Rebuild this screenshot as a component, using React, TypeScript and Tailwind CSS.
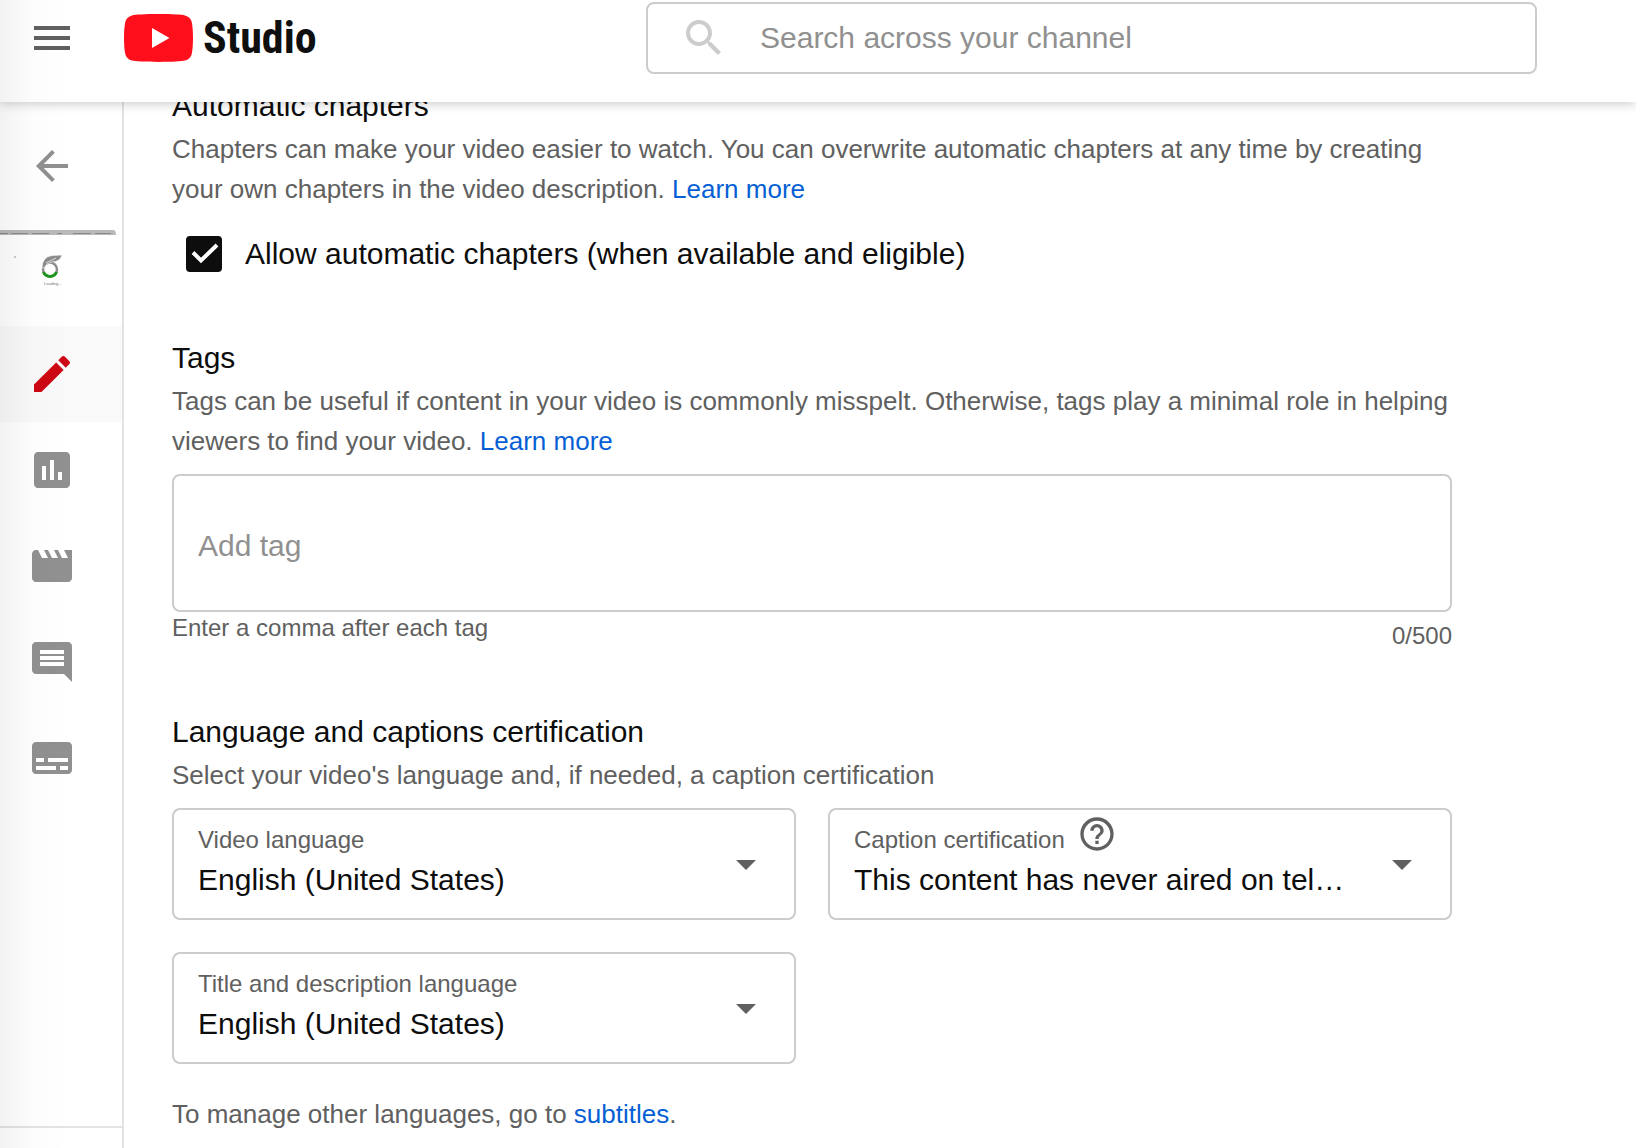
import { ReactNode, useState } from "react";

const iconPaths = {
  menu: "M3 18h18v-2H3v2zm0-5h18v-2H3v2zm0-7v2h18V6H3z",
  search:
    "M15.5 14h-.79l-.28-.27C15.41 12.59 16 11.11 16 9.5 16 5.91 13.09 3 9.5 3S3 5.91 3 9.5 5.91 16 9.5 16c1.61 0 3.09-.59 4.23-1.57l.27.28v.79l5 4.99L20.49 19l-4.99-5zm-6 0C7.01 14 5 11.99 5 9.5S7.01 5 9.5 5 14 7.01 14 9.5 11.99 14 9.5 14z",
  back: "M20 11H7.83l5.59-5.59L12 4l-8 8 8 8 1.41-1.41L7.83 13H20v-2z",
  details:
    "M3 17.25V21h3.75L17.81 9.94l-3.75-3.75L3 17.25zM20.71 7.04c.39-.39.39-1.02 0-1.41l-2.34-2.34c-.39-.39-1.02-.39-1.41 0l-1.83 1.83 3.75 3.75 1.83-1.83z",
  analytics:
    "M19 3H5c-1.1 0-2 .9-2 2v14c0 1.1.9 2 2 2h14c1.1 0 2-.9 2-2V5c0-1.1-.9-2-2-2zM9 17H7v-7h2v7zm4 0h-2V7h2v10zm4 0h-2v-4h2v4z",
  editor:
    "M18 4l2 4h-3l-2-4h-2l2 4h-3l-2-4H8l2 4H7L5 4H4c-1.1 0-1.99.9-1.99 2L2 18c0 1.1.9 2 2 2h16c1.1 0 2-.9 2-2V4h-4z",
  comments:
    "M21.99 4c0-1.1-.89-2-1.99-2H4c-1.1 0-2 .9-2 2v12c0 1.1.9 2 2 2h14l4 4-.01-18zM18 14H6v-2h12v2zm0-3H6V9h12v2zm0-3H6V6h12v2z",
  subtitles:
    "M20 4H4c-1.1 0-2 .9-2 2v12c0 1.1.9 2 2 2h16c1.1 0 2-.9 2-2V6c0-1.1-.9-2-2-2zM4 12h4v2H4v-2zm10 6H4v-2h10v2zm6 0h-4v-2h4v2zm0-4H10v-2h10v2z",
  dropdown: "M7 10l5 5 5-5z",
  help: "M11 18h2v-2h-2v2zm1-16C6.48 2 2 6.48 2 12s4.48 10 10 10 10-4.48 10-10S17.52 2 12 2zm0 18c-4.41 0-8-3.59-8-8s3.59-8 8-8 8 3.59 8 8-3.59 8-8 8zm0-14c-2.21 0-4 1.79-4 4h2c0-1.1.9-2 2-2s2 .9 2 2c0 2-3 1.75-3 5h2c0-2.25 3-2.5 3-5 0-2.21-1.79-4-4-4z",
};

type IconName = keyof typeof iconPaths;

function Icon({
  name,
  className = "size-12",
}: {
  name: IconName;
  className?: string;
}) {
  return (
    <svg
      viewBox="0 0 24 24"
      fill="currentColor"
      aria-hidden="true"
      className={`${className} shrink-0`}
    >
      <path d={iconPaths[name]} />
    </svg>
  );
}

const navItems: { icon: IconName; label: string }[] = [
  { icon: "details", label: "Details" },
  { icon: "analytics", label: "Analytics" },
  { icon: "editor", label: "Editor" },
  { icon: "comments", label: "Comments" },
  { icon: "subtitles", label: "Subtitles" },
];

function Header() {
  return (
    <header className="relative z-10 flex shrink-0 items-center bg-white pt-[2px] pb-7 shadow-[0_2px_10px_rgba(0,0,0,0.2)]">
      <div className="flex w-[646px] shrink-0 items-center gap-12 pl-7">
        <button type="button" aria-label="Menu" className="text-[#606060]">
          <Icon name="menu" />
        </button>
        <a
          href="#"
          className="flex items-center gap-[10px] font-['Roboto_Condensed',Roboto,sans-serif] text-[44px] leading-[48px] font-bold text-[#0f0f0f]"
        >
          <svg viewBox="0 0 69 48" aria-hidden="true" className="h-12 w-[69px]">
            <path
              d="M34.500 0C48 0 58 .6 61 1.400C64.500 2.300 66.800 4.500 67.600 7.500C68.600 11.500 69 18 69 24S68.600 36.500 67.600 40.500C66.800 43.500 64.500 45.700 61 46.600C58 47.400 48 48 34.500 48S11 47.400 8 46.600C4.500 45.700 2.200 43.500 1.400 40.500C.4 36.500 0 30 0 24S.4 11.500 1.400 7.500C2.200 4.500 4.500 2.300 8 1.400C11 .6 21 0 34.500 0Z"
              fill="#ff0f1c"
            />
            <path d="M28 14l17.500 10L28 34z" fill="#fff" />
          </svg>
          Studio
        </a>
      </div>
      <label className="mr-[99px] flex h-[72px] flex-1 items-center gap-8 rounded-lg border-2 border-[#ccc] px-8 text-[#ccc]">
        <Icon name="search" />
        <input
          type="text"
          placeholder="Search across your channel"
          aria-label="Search across your channel"
          className="min-w-0 flex-1 text-[30px] leading-10 text-[#0d0d0d] outline-none placeholder:text-[#909090]"
        />
      </label>
    </header>
  );
}

function Thumbnail() {
  return (
    <a href="#" aria-label="Video thumbnail" className="block h-24">
      <svg viewBox="0 0 116 66" className="h-[66px] w-[116px]">
        <path d="M0 0H113Q116 0 116 5H0Z" fill="#b9b9b9" />
        <path
          d="M0 3.500H8M11 3.500H28M32 3.500H49M57 3.500H62M73 3.500H91M95 3.500H111"
          stroke="#8a8a8a"
        />
        <path d="M15 26v2" stroke="#999" />
        <circle cx="50" cy="39.500" r="7" fill="none" stroke="#8c8c8c" strokeWidth="2.500" />
        <path
          d="M43.500 42a7 7 0 0 0 13 0"
          fill="none"
          stroke="#1e961e"
          strokeWidth="3"
        />
        <path
          d="M42 38Q42 27 52 25.500L62 25Q60 32 52 32Q46 33 44 38Z"
          fill="#8c8c8c"
          stroke="#fff"
          strokeWidth=".6"
        />
        <path d="M46 33L56 28" stroke="#eee" strokeWidth=".8" />
        <text x="44" y="55" fontSize="4" fill="#777">
          Loading...
        </text>
      </svg>
    </a>
  );
}

function Sidebar() {
  return (
    <aside className="flex w-[124px] shrink-0 flex-col border-r-2 border-[#e3e3e3] text-[#909090]">
      <button
        type="button"
        aria-label="Back"
        className="flex h-32 shrink-0 items-center pl-7"
      >
        <Icon name="back" />
      </button>
      <Thumbnail />
      <nav className="flex-1">
        {navItems.map((item, i) => (
          <a
            key={item.label}
            href="#"
            aria-label={item.label}
            className={`flex h-24 items-center pl-7 ${
              i === 0 ? "bg-[#f9f9f9] text-[#cc0814]" : ""
            }`}
          >
            <Icon name={item.icon} />
          </a>
        ))}
      </nav>
      <div className="h-[22px] shrink-0 border-t-2 border-[#e3e3e3]"></div>
    </aside>
  );
}

function Section({
  title,
  text,
  link,
  children,
}: {
  title: string;
  text: string;
  link?: string;
  children: ReactNode;
}) {
  return (
    <section>
      <h2 className="text-[30px] leading-10">{title}</h2>
      <p className="mt-[3px] mb-[13px] text-[26px] leading-10 text-[#606060]">
        {text}{" "}
        {link && (
          <a href="#" className="text-[#065fd4]">
            {link}
          </a>
        )}
      </p>
      {children}
    </section>
  );
}

function SelectBox({
  id,
  label,
  value,
  help,
}: {
  id: string;
  label: string;
  value: string;
  help?: boolean;
}) {
  return (
    <div className="flex h-28 items-center gap-6 rounded-lg border-2 border-[#ccc] px-6">
      <div className="min-w-0 flex-1 self-start pt-1">
        <div className="flex h-[42px] items-start gap-3 text-[#606060]">
          <label htmlFor={id} className="self-end text-2xl">
            {label}
          </label>
          {help && (
            <button type="button" aria-label="Help">
              <Icon name="help" className="size-10" />
            </button>
          )}
        </div>
        <select
          id={id}
          className="mt-1 block w-full appearance-none truncate text-[30px] leading-10 outline-none"
        >
          <option>{value}</option>
        </select>
      </div>
      <Icon name="dropdown" className="size-12 text-[#606060]" />
    </div>
  );
}

export default function App() {
  const [chapters, setChapters] = useState<boolean>(true);
  const [tags, setTags] = useState<string>("");

  return (
    <div className="relative flex h-screen flex-col overflow-hidden bg-white font-['Liberation_Sans',Arial,sans-serif] text-[#0d0d0d]">
      <Header />
      <div className="flex min-h-0 flex-1">
        <Sidebar />
        <main className="min-w-0 flex-1 overflow-hidden px-12">
          <div className="-mt-4 flex max-w-[1280px] flex-col gap-[60px]">
            <Section
              title="Automatic chapters"
              text="Chapters can make your video easier to watch. You can overwrite automatic chapters at any time by creating your own chapters in the video description."
              link="Learn more"
            >
              <div className="flex h-14 items-center gap-[23px] pt-2 pl-[14px]">
                <span className="relative flex size-9">
                  <input
                    id="chapters"
                    type="checkbox"
                    checked={chapters}
                    onChange={(e) => setChapters(e.target.checked)}
                    className="size-9 appearance-none rounded border-4 border-[#0d0d0d] checked:bg-[#0d0d0d]"
                  />
                  {chapters && (
                    <svg
                      viewBox="0 0 36 36"
                      aria-hidden="true"
                      className="pointer-events-none absolute inset-0"
                    >
                      <path
                        d="M7 16.500L15 24.500L31 9"
                        fill="none"
                        stroke="#fff"
                        strokeWidth="4"
                      />
                    </svg>
                  )}
                </span>
                <label htmlFor="chapters" className="text-[30px] leading-10">
                  Allow automatic chapters (when available and eligible)
                </label>
              </div>
            </Section>

            <Section
              title="Tags"
              text="Tags can be useful if content in your video is commonly misspelt. Otherwise, tags play a minimal role in helping viewers to find your video."
              link="Learn more"
            >
              <div className="flex h-[138px] rounded-lg border-2 border-[#ccc] px-6 pt-1.5">
                <input
                  type="text"
                  value={tags}
                  onChange={(e) => setTags(e.target.value)}
                  placeholder="Add tag"
                  aria-label="Add tag"
                  className="w-full text-[30px] leading-10 outline-none placeholder:text-[#909090]"
                />
              </div>
              <div className="flex h-10 justify-between text-2xl text-[#606060]">
                <span>Enter a comma after each tag</span>
                <span className="self-end">{tags.length}/500</span>
              </div>
            </Section>

            <Section
              title="Language and captions certification"
              text="Select your video's language and, if needed, a caption certification"
            >
              <div className="grid grid-cols-2 gap-8">
                <SelectBox
                  id="video-language"
                  label="Video language"
                  value="English (United States)"
                />
                <SelectBox
                  id="caption-certification"
                  label="Caption certification"
                  value="This content has never aired on television in the US"
                  help
                />
                <SelectBox
                  id="title-language"
                  label="Title and description language"
                  value="English (United States)"
                />
              </div>
              <p className="mt-[30px] text-[26px] leading-10 text-[#606060]">
                To manage other languages, go to{" "}
                <a href="#" className="text-[#065fd4]">
                  subtitles
                </a>
                .
              </p>
            </Section>
          </div>
        </main>
      </div>
      {/* soft shade along the left edge of the window */}
      <div className="pointer-events-none absolute inset-y-0 left-0 z-20 w-[68px] bg-linear-to-r from-black/5 via-black/1 to-transparent"></div>
    </div>
  );
}
